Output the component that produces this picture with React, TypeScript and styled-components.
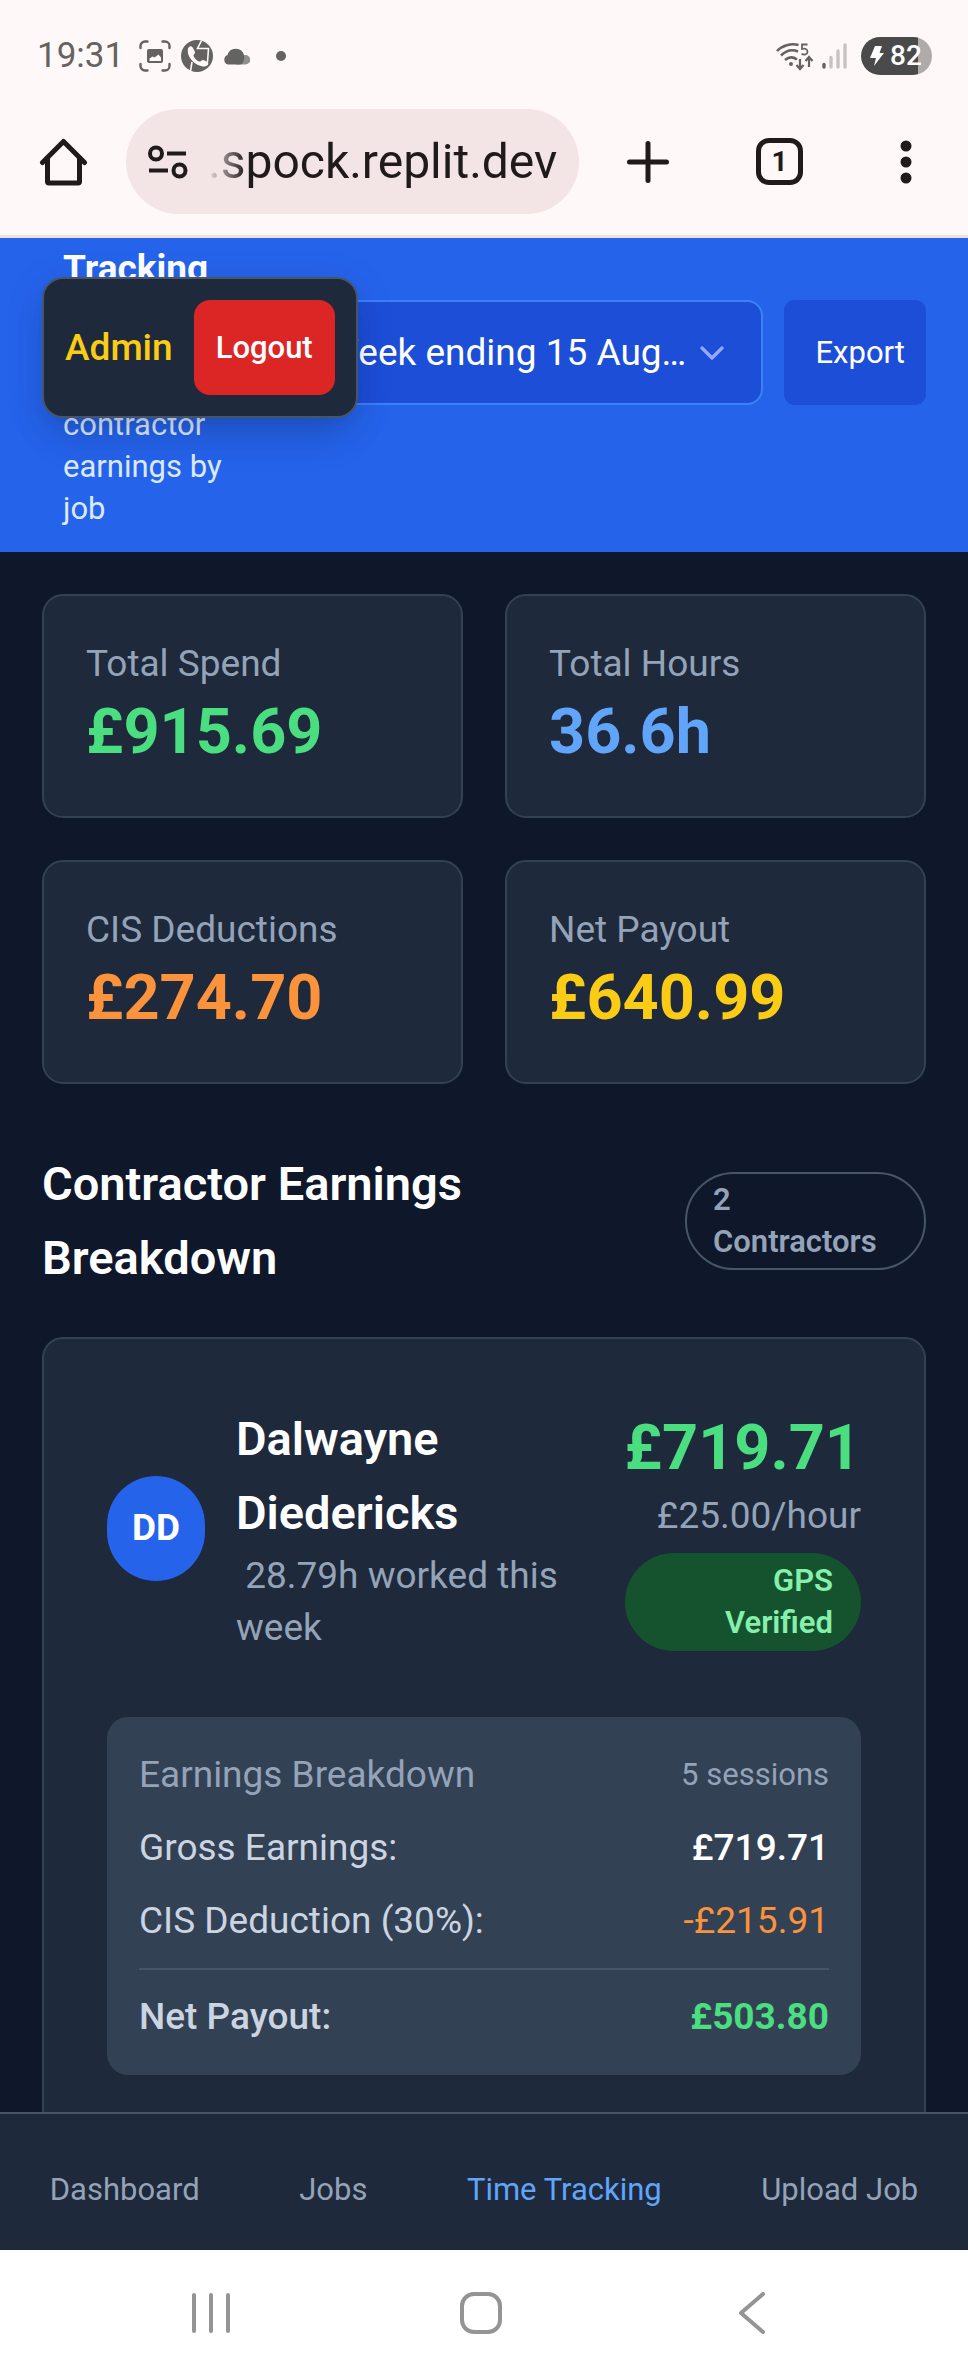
import React from "react";
import styled, { createGlobalStyle } from "styled-components";
import { ChevronDown } from "lucide-react";

const color = {
  chrome: "#fff8f8",
  ink: "#201a1b",
  status: "#646361",
  page: "#0f172a",
  card: "#1e293b",
  panel: "#334155",
  line: "#475569",
  muted: "#94a3b8",
  label: "#cbd5e1",
  blue: "#2563eb",
  blueDark: "#1d4ed8",
  blueLight: "#60a5fa",
  green: "#4ade80",
  orange: "#fb923c",
  yellow: "#facc15",
};

const GlobalStyle = createGlobalStyle`
  *, *::before, *::after { box-sizing: border-box; }
  body { margin: 0; background: ${color.page}; font-family: Roboto, "Liberation Sans", sans-serif; font-size: 37px; line-height: 52px; }
  h1, h2, h3, p, dl, dd, dt { margin: 0; font-size: inherit; font-weight: inherit; }
  button, select, input { font: inherit; color: inherit; border: 0; margin: 0; padding: 0; background: none; }
  svg { display: block; flex: none; }
`;

const Screen = styled.div`
  display: flex;
  flex-direction: column;
  min-height: 100vh;
`;

/* Phone status bar and browser toolbar */

const BrowserChrome = styled.div`
  background: ${color.chrome};
  border-bottom: 3px solid #f0e0e2;
`;

const StatusBar = styled.div`
  display: flex;
  justify-content: space-between;
  align-items: center;
  height: 88px;
  padding: 24px 36px 0 37px;
  color: ${color.status};
`;

const StatusGroup = styled.div<{ $gap: number }>`
  display: flex;
  align-items: center;
  gap: ${(p) => p.$gap}px;
`;

const Clock = styled.time`
  width: 92px;
  font-size: 35px;
  line-height: 40px;
`;

const Battery = styled.div`
  display: flex;
  align-items: center;
  gap: 6px;
  width: 71px;
  height: 38px;
  margin-left: 5px;
  padding-left: 9px;
  border-radius: 19px;
  background: linear-gradient(to right, #4b4a4a 57px, #b0abab 57px);
  color: #fff;
  font-size: 28px;
  font-weight: 500;
  line-height: 38px;
`;

const Toolbar = styled.div`
  display: grid;
  grid-template-columns: 126px 1fr 137px 127px 125px;
  padding: 21px 0;
  color: ${color.ink};
`;

const IconButton = styled.button`
  display: flex;
  align-items: center;
  justify-content: center;
`;

const AddressBar = styled.label`
  display: flex;
  align-items: center;
  gap: 18px;
  min-width: 0;
  height: 105px;
  padding: 0 16px 0 22px;
  border-radius: 53px;
  background: #f3e4e6;
`;

const AddressInput = styled.input`
  flex: 1;
  min-width: 0;
  height: 64px;
  padding-left: 2px;
  outline: 0;
  font-size: 48px;
  mask-image: linear-gradient(to right, transparent, #000 40px);
`;

const TabCount = styled.span`
  display: flex;
  align-items: center;
  justify-content: center;
  width: 47px;
  height: 47px;
  border: 5px solid ${color.ink};
  border-radius: 13px;
  font-size: 28px;
  font-weight: 700;
  line-height: 37px;
`;

/* Page header */

const Header = styled.header`
  position: relative;
  display: flex;
  align-items: flex-start;
  padding: 5px 42px 22px 63px;
  background: ${color.blue};
  color: #fff;
`;

const TitleBlock = styled.div`
  flex: 0 0 176px;
`;

const PageTitle = styled.h1`
  font-weight: 700;
`;

const Subtitle = styled.p`
  margin-top: 109px;
  color: #dbeafe;
  font-size: 31px;
  line-height: 42px;
`;

const Controls = styled.div`
  display: flex;
  flex: 1;
  gap: 21px;
  min-width: 0;
  margin: 57px 0 0 53px;
`;

const SelectBox = styled.div`
  display: grid;
  flex: 1;
  align-items: center;
  min-width: 0;
  height: 105px;
  > * { grid-area: 1 / 1; }
  > svg { justify-self: end; margin-right: 31px; color: #93a8f8; pointer-events: none; }
`;

const WeekSelect = styled.select`
  width: 100%;
  height: 100%;
  padding: 0 64px 0 32px;
  appearance: none;
  border: 2px solid #3b82f6;
  border-radius: 16px;
  background: ${color.blueDark};
`;

const ExportButton = styled.button`
  height: 105px;
  padding: 0 21px 0 32px;
  border-radius: 11px;
  background: ${color.blueDark};
  font-size: 31px;
`;

const AdminPopup = styled.div`
  position: absolute;
  top: 39px;
  left: 42px;
  display: flex;
  align-items: center;
  gap: 21px;
  padding: 21px;
  border: 2px solid ${color.line};
  border-radius: 21px;
  background: ${color.card};
  box-shadow: 0 26px 40px -8px rgba(0, 0, 0, 0.1), 0 10px 16px -10px rgba(0, 0, 0, 0.1), 0 8px 40px rgba(0, 0, 0, 0.1);
`;

const Role = styled.span`
  color: ${color.yellow};
  font-weight: 500;
`;

const LogoutButton = styled.button`
  height: 95px;
  padding: 0 22px;
  border-radius: 16px;
  background: #dc2626;
  color: #fff;
  font-size: 31px;
  font-weight: 500;
`;

/* Main content */

const Main = styled.main`
  display: flex;
  flex: 1;
  flex-direction: column;
  padding: 42px 42px 0;
`;

const StatGrid = styled.section`
  display: grid;
  grid-template-columns: 1fr 1fr;
  gap: 42px;
`;

const StatCard = styled.div`
  padding: 42px;
  border: 2px solid ${color.panel};
  border-radius: 21px;
  background: ${color.card};
`;

const Muted = styled.p`
  color: ${color.muted};
  white-space: pre-wrap;
`;

const Amount = styled.p<{ $color: string }>`
  color: ${(p) => p.$color};
  font-size: 63px;
  font-weight: 700;
  line-height: 84px;
`;

const SectionHead = styled.div`
  display: flex;
  align-items: center;
  justify-content: space-between;
  margin: 63px 0 42px;
`;

const SectionTitle = styled.h2`
  flex: 0 1 520px;
  color: #fff;
  font-size: 47px;
  font-weight: 600;
  line-height: 74px;
`;

const Pill = styled.span`
  display: block;
  border-radius: 50px;
  font-size: 31px;
  font-weight: 600;
  line-height: 42px;
`;

const CountPill = styled(Pill)`
  flex: none;
  width: 241px;
  padding: 5px 26px;
  border: 2px solid ${color.line};
  color: ${color.muted};
`;

const VerifiedPill = styled(Pill)`
  margin-top: 11px;
  padding: 7px 28px;
  background: #14532d;
  color: #86efac;
`;

const ContractorCard = styled.article`
  flex: 1;
  padding: 63px 63px 32px;
  border: 2px solid ${color.panel};
  border-bottom: 0;
  border-radius: 21px 21px 0 0;
  background: ${color.card};
`;

const ContractorHead = styled.div`
  display: flex;
  align-items: center;
  margin-bottom: 63px;
`;

const Avatar = styled.div`
  display: flex;
  flex: none;
  align-items: center;
  justify-content: center;
  width: 98px;
  height: 105px;
  margin-right: 31px;
  border-radius: 49px;
  background: ${color.blue};
  color: #fff;
  font-weight: 700;
`;

const Identity = styled.div`
  flex: 1;
  min-width: 0;
`;

const ContractorName = styled.h3`
  max-width: 300px;
  color: #fff;
  font-size: 47px;
  font-weight: 600;
  line-height: 74px;
`;

const Pay = styled.div`
  flex: none;
  margin-left: 42px;
  text-align: right;
`;

const Panel = styled.section`
  display: flex;
  flex-direction: column;
  gap: 21px;
  padding: 32px;
  border-radius: 21px;
  background: ${color.panel};
`;

const Row = styled.div`
  display: flex;
  align-items: center;
  justify-content: space-between;
`;

const Lines = styled.dl`
  display: flex;
  flex-direction: column;
  gap: 21px;
  color: ${color.label};
`;

const TotalRow = styled(Row)`
  padding-top: 21px;
  border-top: 2px solid ${color.line};
  font-weight: 500;
`;

const Sessions = styled.span`
  color: ${color.muted};
  font-size: 31px;
`;

const Figure = styled.dd<{ $color: string; $weight: number }>`
  color: ${(p) => p.$color};
  font-weight: ${(p) => p.$weight};
`;

/* Bottom bars */

const TabBar = styled.nav`
  display: flex;
  justify-content: space-around;
  padding: 55px 0 39px;
  border-top: 2px solid ${color.line};
  background: ${color.card};
  font-size: 31px;
  line-height: 42px;
`;

const TabLink = styled.a<{ $active?: boolean }>`
  color: ${(p) => (p.$active ? color.blueLight : color.muted)};
  text-decoration: none;
`;

const SystemBar = styled.div`
  display: grid;
  grid-template-columns: repeat(3, 1fr);
  height: 126px;
  padding: 0 81px 0 76px;
  background: #fff;
  color: #949494;
`;

const CaptureIcon = () => (
  <svg width="32" height="32" viewBox="0 0 32 32" fill="none" stroke="currentColor" strokeWidth="2.4" strokeLinecap="round">
    <path d="M1.500 8V6a4.500 4.500 0 0 1 4.500-4.500h2.500M23.500 1.500H26A4.500 4.500 0 0 1 30.500 6v2M30.500 24v2a4.500 4.500 0 0 1-4.500 4.500h-2.500M8.500 30.500H6A4.500 4.500 0 0 1 1.500 26v-2" />
    <rect x="8" y="9" width="16" height="14" rx="2" fill="currentColor" stroke="none" />
    <path d="M10.500 21v-2.500l3-2 2 1 4-3 2.500 3V21z" fill={color.chrome} stroke="none" />
  </svg>
);

const CallIcon = () => (
  <svg width="32" height="32" viewBox="0 0 32 32" fill="none">
    <circle cx="16" cy="16" r="16" fill="currentColor" />
    <path d="M20.500 0.500L16.500 8.500H27.500L26.500 22M9.500 31L11 22" stroke={color.chrome} strokeWidth="1.600" />
    <path d="M7 8.500c1.500-2.500 3.500-3 5-.5l2 4c.500 1.500-2 2.500-1.500 4 1 2.500 3 4.500 5.500 5.500 1.500.5 3-2 4.500-1.500l4 2c2 1.500 0 4-2.500 4.500C15.500 27 5 17.500 7 8.500z" fill={color.chrome} />
  </svg>
);

const CloudIcon = () => (
  <svg width="27" height="18" viewBox="0 0 27 18">
    <path d="M13 17.500h9.500a4.500 4.500 0 0 0 0-9.500H16z" fill="#91908e" />
    <path d="M5 17.500a5 5 0 0 1-.5-9.500A8.500 8.500 0 0 1 21 8.500c.8 5-1 9-4 9z" fill="currentColor" />
  </svg>
);

const WifiIcon = () => (
  <svg width="38" height="30" viewBox="0 0 38 30" fill="none" stroke="currentColor" strokeWidth="2.600">
    <path d="M1 10C6 4.500 15 2 22.500 4M5 14.500C10 9.500 16 8 22 10.500M9 19c3.500-3 8-3.500 12-.5" />
    <circle cx="15" cy="23" r="2" fill="currentColor" stroke="none" />
    <path d="M24 18v9M20.500 24l3.500 4 3.500-4M33 26v-9M29.500 20l3.500-4 3.500 4" strokeWidth="2.200" />
    <path d="M31.500 3.500h-5.500v4.500c3-1 5.500 0 5.500 2.800 0 2.800-3.500 3.600-6 2" strokeWidth="1.800" />
  </svg>
);

const SignalIcon = () => (
  <svg width="26" height="28" viewBox="0 0 26 28" strokeWidth="3.400" strokeLinecap="round">
    <path d="M2 22.500V25" stroke="currentColor" />
    <path d="M9 15.500V25M16 9V25M23 3V25" stroke="#c8c2c2" />
  </svg>
);

const HomeIcon = () => (
  <svg width="49" height="49" viewBox="0 0 49 49" fill="none" stroke="currentColor" strokeWidth="5" strokeLinejoin="round" strokeLinecap="round">
    <path d="M3.500 25.500L24.500 4.500l21 21" />
    <path d="M8.500 21v23.500a1.500 1.500 0 0 0 1.500 1.500h29a1.500 1.500 0 0 0 1.500-1.500V21" />
  </svg>
);

const TuneIcon = () => (
  <svg width="40" height="34" viewBox="0 0 40 34" fill="none" stroke="currentColor" strokeWidth="4">
    <circle cx="8" cy="8.500" r="6" />
    <circle cx="31.500" cy="25.500" r="6" />
    <path d="M19 8.500h19M1 25.500h19" />
  </svg>
);

const tabs = ["Dashboard", "Jobs", "Time Tracking", "Upload Job"];

const stats = [
  { label: "Total Spend", value: "£915.69", color: color.green },
  { label: "Total Hours", value: "36.6h", color: color.blueLight },
  { label: "CIS Deductions", value: "£274.70", color: color.orange },
  { label: "Net Payout", value: "£640.99", color: color.yellow },
];

export default function App() {
  return (
    <Screen>
      <GlobalStyle />
      <BrowserChrome>
        <StatusBar>
          <StatusGroup $gap={10}>
            <Clock>19:31</Clock>
            <CaptureIcon />
            <CallIcon />
            <StatusGroup $gap={26}>
              <CloudIcon />
              <svg width="10" height="10" viewBox="0 0 10 10">
                <circle cx="5" cy="5" r="5" fill="currentColor" />
              </svg>
            </StatusGroup>
          </StatusGroup>
          <StatusGroup $gap={8}>
            <WifiIcon />
            <SignalIcon />
            <Battery>
              <svg width="14" height="20" viewBox="0 0 14 20" fill="currentColor">
                <path d="M5 0h7L9.500 7H14L4 20l2-8H0z" />
              </svg>
              82
            </Battery>
          </StatusGroup>
        </StatusBar>
        <Toolbar>
          <IconButton aria-label="Home">
            <HomeIcon />
          </IconButton>
          <AddressBar>
            <TuneIcon />
            <AddressInput type="text" aria-label="Address" defaultValue=".spock.replit.dev" />
          </AddressBar>
          <IconButton aria-label="New tab">
            <svg width="42" height="42" viewBox="0 0 42 42" stroke="currentColor" strokeWidth="5" strokeLinecap="round">
              <path d="M21 2.500v37M2.500 21h37" />
            </svg>
          </IconButton>
          <IconButton aria-label="Tabs">
            <TabCount>1</TabCount>
          </IconButton>
          <IconButton aria-label="Menu">
            <svg width="12" height="44" viewBox="0 0 12 44" fill="currentColor">
              <circle cx="6" cy="6" r="5.500" />
              <circle cx="6" cy="22" r="5.500" />
              <circle cx="6" cy="38" r="5.500" />
            </svg>
          </IconButton>
        </Toolbar>
      </BrowserChrome>

      <Header>
        <TitleBlock>
          <PageTitle>Tracking</PageTitle>
          <Subtitle>contractor earnings by job</Subtitle>
        </TitleBlock>
        <Controls>
          <SelectBox>
            <WeekSelect aria-label="Week">
              <option>Week ending 15 Aug…</option>
            </WeekSelect>
            <ChevronDown size={40} strokeWidth={2} />
          </SelectBox>
          <ExportButton>Export</ExportButton>
        </Controls>
        <AdminPopup>
          <Role>Admin</Role>
          <LogoutButton>Logout</LogoutButton>
        </AdminPopup>
      </Header>

      <Main>
        <StatGrid>
          {stats.map((s) => (
            <StatCard key={s.label}>
              <Muted>{s.label}</Muted>
              <Amount $color={s.color}>{s.value}</Amount>
            </StatCard>
          ))}
        </StatGrid>

        <SectionHead>
          <SectionTitle>Contractor Earnings Breakdown</SectionTitle>
          <CountPill>
            2<br />
            Contractors
          </CountPill>
        </SectionHead>

        <ContractorCard>
          <ContractorHead>
            <Avatar>DD</Avatar>
            <Identity>
              <ContractorName>Dalwayne Diedericks</ContractorName>
              <Muted>{" 28.79h worked this week"}</Muted>
            </Identity>
            <Pay>
              <Amount $color={color.green}>£719.71</Amount>
              <Muted>£25.00/hour</Muted>
              <VerifiedPill>
                GPS
                <br />
                Verified
              </VerifiedPill>
            </Pay>
          </ContractorHead>
          <Panel>
            <Row>
              <Muted>Earnings Breakdown</Muted>
              <Sessions>5 sessions</Sessions>
            </Row>
            <Lines>
              <Row>
                <dt>Gross Earnings:</dt>
                <Figure $color="#fff" $weight={500}>£719.71</Figure>
              </Row>
              <Row>
                <dt>CIS Deduction (30%):</dt>
                <Figure $color={color.orange} $weight={400}>-£215.91</Figure>
              </Row>
              <TotalRow>
                <dt>Net Payout:</dt>
                <Figure $color={color.green} $weight={700}>£503.80</Figure>
              </TotalRow>
            </Lines>
          </Panel>
        </ContractorCard>
      </Main>

      <TabBar>
        {tabs.map((t) => (
          <TabLink key={t} href="#" $active={t === "Time Tracking"}>
            {t}
          </TabLink>
        ))}
      </TabBar>
      <SystemBar>
        <IconButton aria-label="Recent apps">
          <svg width="40" height="42" viewBox="0 0 40 42" stroke="#949494" strokeWidth="4" strokeLinecap="round">
            <path d="M3 3v36M20 3v36M37 3v36" />
          </svg>
        </IconButton>
        <IconButton aria-label="Home screen">
          <svg width="42" height="42" viewBox="0 0 42 42" fill="none" stroke="#949494" strokeWidth="4">
            <rect x="2" y="2" width="38" height="38" rx="12" />
          </svg>
        </IconButton>
        <IconButton aria-label="Back">
          <svg width="28" height="42" viewBox="0 0 28 42" fill="none" stroke="#949494" strokeWidth="4" strokeLinecap="round" strokeLinejoin="round">
            <path d="M25 2L3 21l22 19" />
          </svg>
        </IconButton>
      </SystemBar>
    </Screen>
  );
}
